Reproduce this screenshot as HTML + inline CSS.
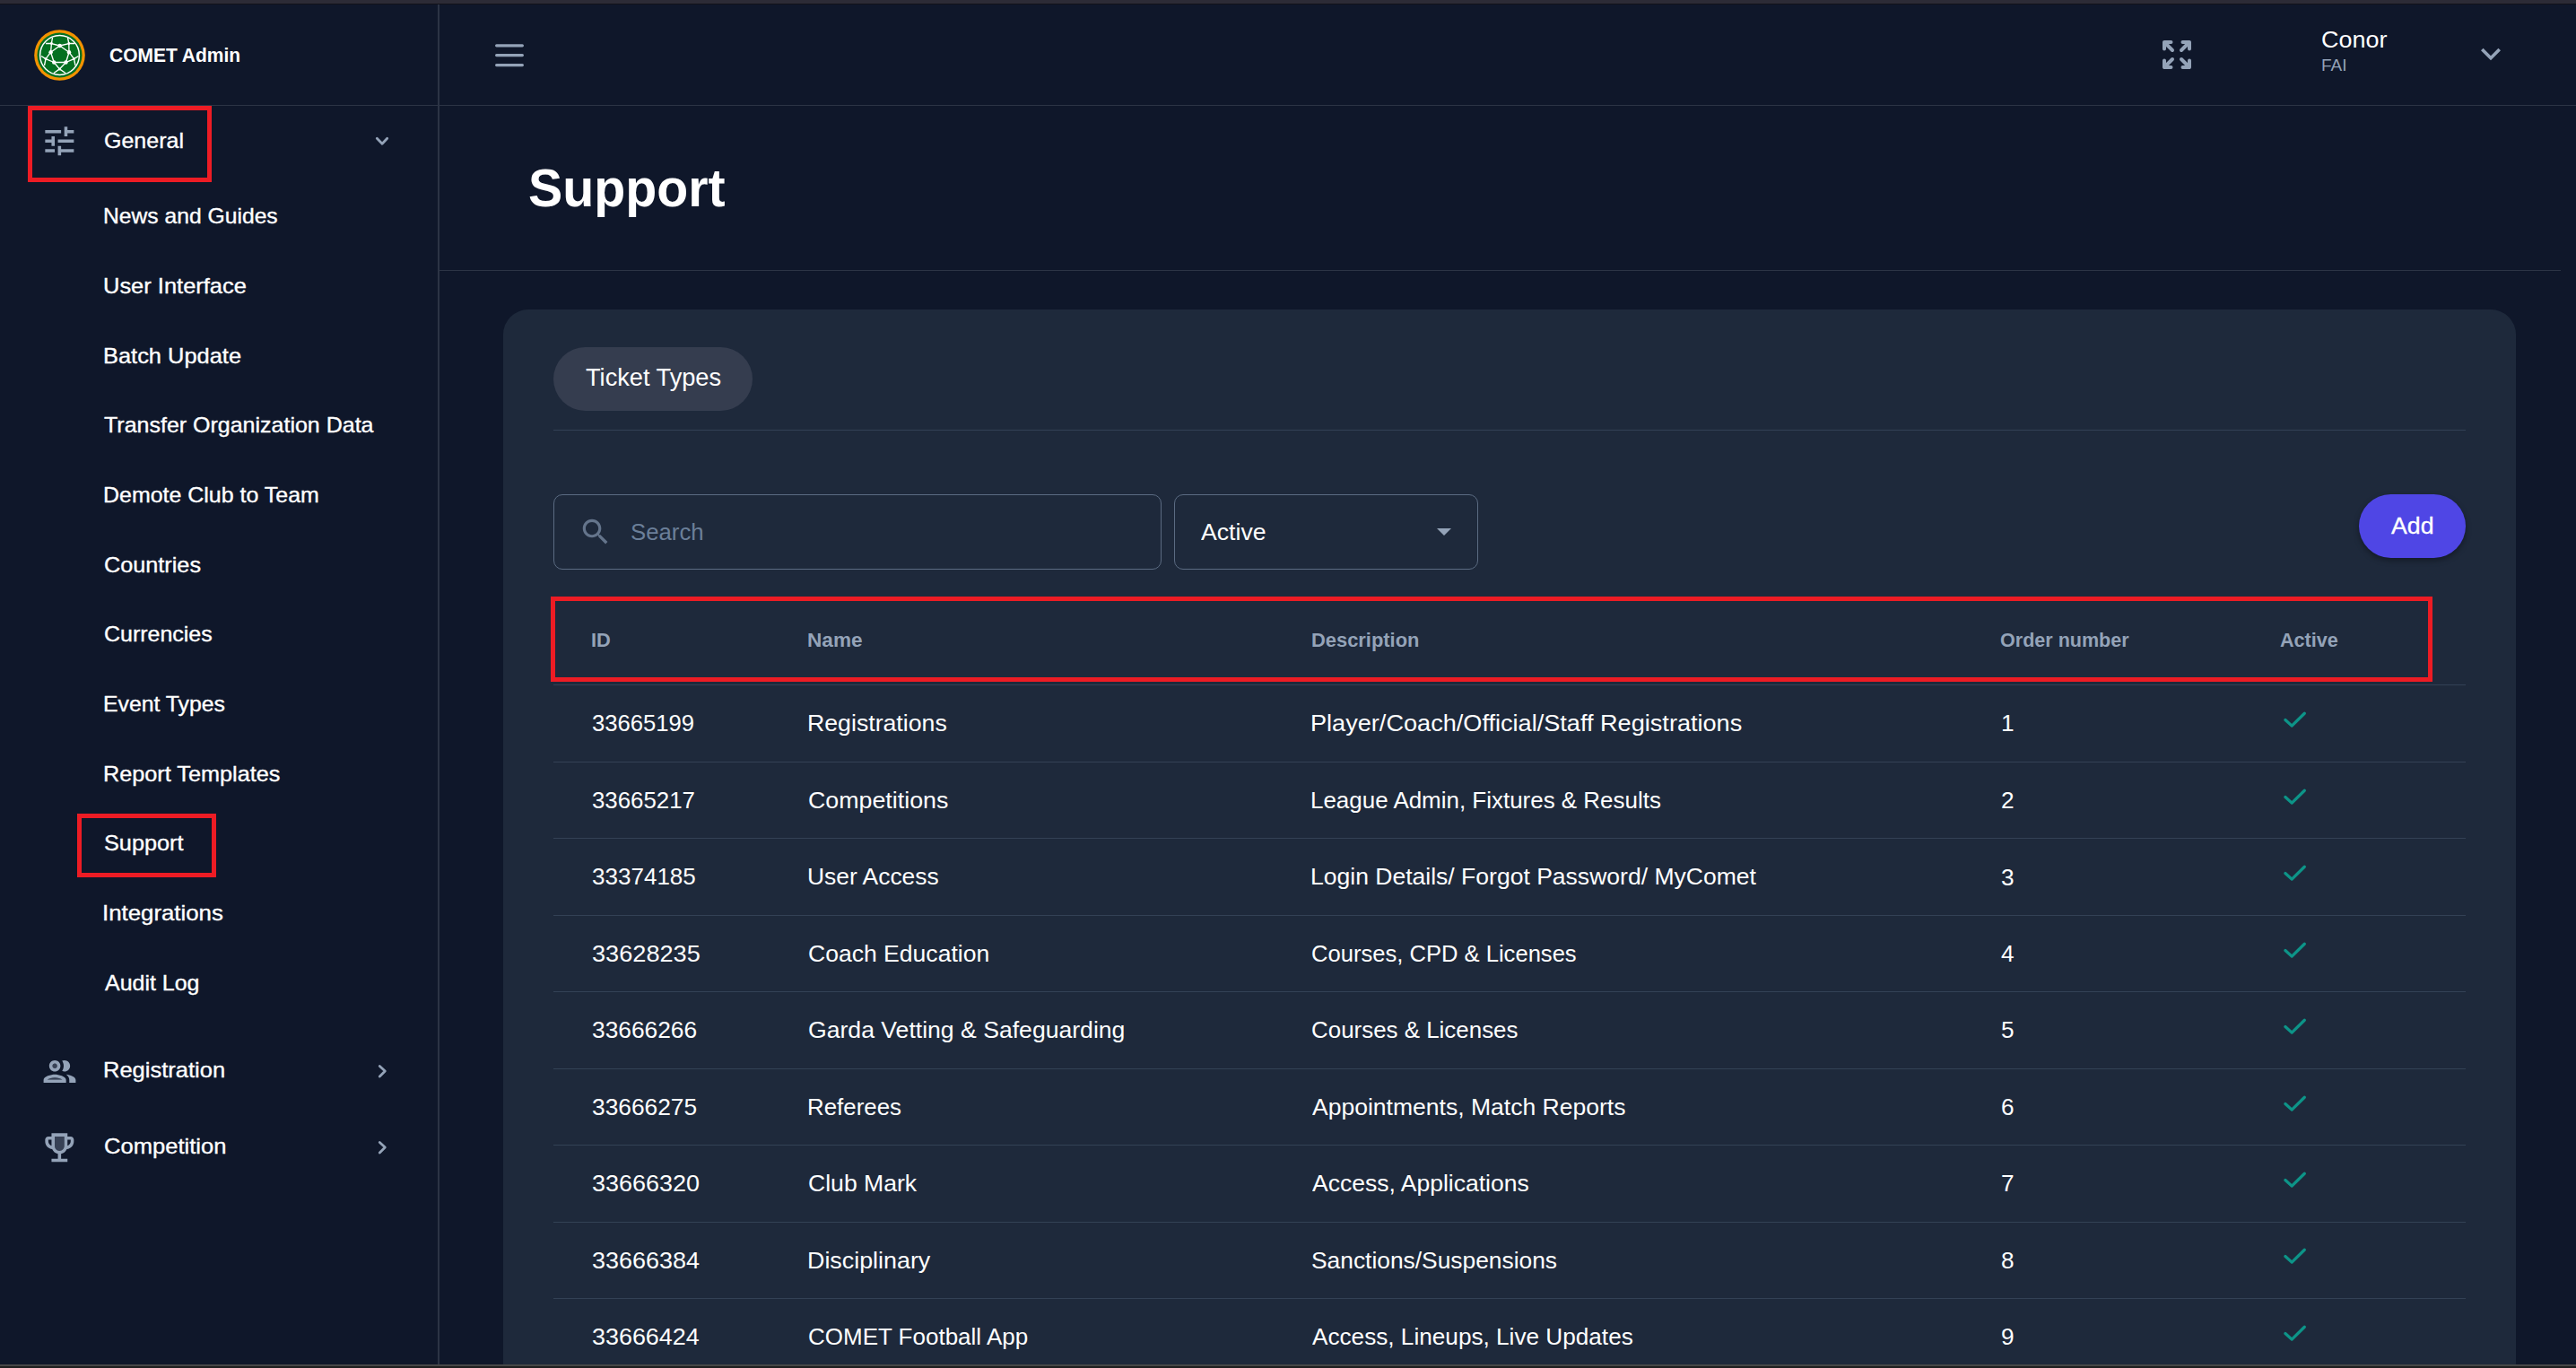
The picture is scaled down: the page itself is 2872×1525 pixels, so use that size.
<!DOCTYPE html>
<html><head><meta charset="utf-8"><style>
html,body{margin:0;padding:0;}
body{width:2872px;height:1525px;overflow:hidden;background:#0f172a;position:relative;font-family:"Liberation Sans", sans-serif;}
.t{position:absolute;line-height:1;white-space:nowrap;font-family:"Liberation Sans", sans-serif;}
.b{position:absolute;box-sizing:border-box;}
svg{position:absolute;overflow:visible;}
</style></head><body>
<div class="b" style="left:0.00px;top:0.00px;width:2872.00px;height:4.00px;background:#2c2b36"></div>
<div class="b" style="left:0.00px;top:4.00px;width:2872.00px;height:1.00px;background:#121218"></div>
<div class="b" style="left:488.00px;top:5.00px;width:2.00px;height:1516.00px;background:#2c3445"></div>
<div class="b" style="left:0.00px;top:117.00px;width:2872.00px;height:1.00px;background:#2c3445"></div>
<div class="b" style="left:490.00px;top:301.00px;width:2365.00px;height:1.00px;background:#2c3445"></div>
<svg style="left:37px;top:31.6px" width="59" height="59" viewBox="-29.5 -29.5 59 59">
<circle r="28.3" fill="#f39200"/>
<circle r="25.0" fill="#047021"/>
<circle r="21.9" fill="none" stroke="#fff" stroke-width="1.5"/>
<g stroke="#fff" stroke-width="1.35" fill="none">
<path d="M0.2,-10.5 L-9.9,-3.3 L-6.3,8 L7,8 L10.5,-3.3 Z"/>
<path d="M-6.3,8 L-0.1,15.4 L7,8"/>
<path d="M-9.9,-3.3 L-15.5,4.1 L-6.3,8 M10.5,-3.3 L16,4.1 L7,8"/>
<path d="M0.2,-10.5 L-9.1,-13 L-9.9,-3.3 M0.2,-10.5 L10.3,-13 L10.5,-3.3"/>
<path d="M-9.1,-13 L-8,-19.5 M10.3,-13 L9,-19.5 M-9.1,-13 L-15.5,-13 M10.3,-13 L16.5,-13"/>
<path d="M-15.5,4.1 L-20.5,1 M16,4.1 L21,1 M-15.5,4.1 L-17,11.5 M16,4.1 L17.5,11.5"/>
<path d="M-0.1,15.4 L-6.5,20 M-0.1,15.4 L6.5,20"/>
</g>
<g fill="#fff">
<circle cx="0.2" cy="-10.5" r="2.2"/><circle cx="-9.9" cy="-3.3" r="2.2"/><circle cx="10.5" cy="-3.3" r="2.2"/>
<circle cx="-6.3" cy="8" r="2.2"/><circle cx="7" cy="8" r="2.2"/><circle cx="-0.1" cy="15.4" r="1.5"/>
<circle cx="-15.5" cy="4.1" r="1.4"/><circle cx="16" cy="4.1" r="1.4"/>
<circle cx="-9.1" cy="-13" r="1.4"/><circle cx="10.3" cy="-13" r="1.4"/>
</g>
</svg>
<div class="t" style="left:122.16px;top:52.03px;font-size:21.5px;color:#fff;font-weight:700;transform:scaleX(0.9756);transform-origin:0 0;">COMET Admin</div>
<svg style="left:552px;top:48.5px" width="32" height="26" viewBox="0 0 32 26">
<g stroke="#94a3b8" stroke-width="3.2" stroke-linecap="round"><path d="M1.6,1.8 H30.4 M1.6,12.6 H30.4 M1.6,23.6 H30.4"/></g></svg>
<svg style="left:2411px;top:45px" width="32" height="32" viewBox="0 0 32 32">
<g stroke="#94a3b8" stroke-width="4" stroke-linecap="round" stroke-linejoin="round" fill="none">
<path d="M2,9.5 V2 H9.5 M2,2 L11,11"/>
<path d="M30,9.5 V2 H22.5 M30,2 L21,11"/>
<path d="M2,22.5 V30 H9.5 M2,30 L11,21"/>
<path d="M30,22.5 V30 H22.5 M30,30 L21,21"/>
</g></svg>
<div class="t" style="left:2588.15px;top:31.21px;font-size:26.5px;color:#fff;font-weight:400;transform:scaleX(1.0169);transform-origin:0 0;">Conor</div>
<div class="t" style="left:2587.98px;top:64.19px;font-size:18.0px;color:#94a3b8;font-weight:400;transform:scaleX(1.0547);transform-origin:0 0;">FAI</div>
<svg style="left:2755px;top:38px" width="44" height="44" viewBox="0 0 24 24">
<path fill="#94a3b8" d="M16.59 8.59L12 13.17 7.41 8.59 6 10l6 6 6-6z"/></svg>
<svg style="left:44.7px;top:135.7px" width="42.7" height="42.7" viewBox="0 0 24 24">
<path fill="#94a3b8" d="M3 17v2h6v-2H3zM3 5v2h10V5H3zm10 16v-2h8v-2h-8v-2h-2v6h2zM7 9v2H3v2h4v2h2V9H7zm14 4v-2H11v2h10zm-6-4h2V7h4V5h-4V3h-2v6z"/></svg>
<div class="t" style="left:115.55px;top:145.07px;font-size:24.3px;color:#fff;font-weight:400;-webkit-text-stroke:0.35px #fff;transform:scaleX(1.0296);transform-origin:0 0;">General</div>
<svg style="left:412px;top:142px" width="28" height="28" viewBox="0 0 28 28">
<path d="M8.3,12.3 L14.1,18.2 L19.7,12.3" stroke="#94a3b8" stroke-width="2.8" fill="none" stroke-linecap="round" stroke-linejoin="round"/></svg>
<div class="t" style="left:114.83px;top:229.27px;font-size:24.3px;color:#fff;font-weight:400;-webkit-text-stroke:0.35px #fff;transform:scaleX(1.0152);transform-origin:0 0;">News and Guides</div>
<div class="t" style="left:115.02px;top:306.95px;font-size:24.3px;color:#fff;font-weight:400;-webkit-text-stroke:0.35px #fff;transform:scaleX(1.0478);transform-origin:0 0;">User Interface</div>
<div class="t" style="left:114.77px;top:384.63px;font-size:24.3px;color:#fff;font-weight:400;-webkit-text-stroke:0.35px #fff;transform:scaleX(1.0462);transform-origin:0 0;">Batch Update</div>
<div class="t" style="left:116.30px;top:462.31px;font-size:24.3px;color:#fff;font-weight:400;-webkit-text-stroke:0.35px #fff;transform:scaleX(1.0285);transform-origin:0 0;">Transfer Organization Data</div>
<div class="t" style="left:114.80px;top:539.99px;font-size:24.3px;color:#fff;font-weight:400;-webkit-text-stroke:0.35px #fff;transform:scaleX(1.0267);transform-origin:0 0;">Demote Club to Team</div>
<div class="t" style="left:115.54px;top:617.68px;font-size:24.3px;color:#fff;font-weight:400;-webkit-text-stroke:0.35px #fff;transform:scaleX(1.0387);transform-origin:0 0;">Countries</div>
<div class="t" style="left:115.55px;top:695.36px;font-size:24.3px;color:#fff;font-weight:400;-webkit-text-stroke:0.35px #fff;transform:scaleX(1.0273);transform-origin:0 0;">Currencies</div>
<div class="t" style="left:114.82px;top:773.04px;font-size:24.3px;color:#fff;font-weight:400;-webkit-text-stroke:0.35px #fff;transform:scaleX(1.0202);transform-origin:0 0;">Event Types</div>
<div class="t" style="left:114.78px;top:850.72px;font-size:24.3px;color:#fff;font-weight:400;-webkit-text-stroke:0.35px #fff;transform:scaleX(1.0391);transform-origin:0 0;">Report Templates</div>
<div class="t" style="left:115.79px;top:928.40px;font-size:24.3px;color:#fff;font-weight:400;-webkit-text-stroke:0.35px #fff;transform:scaleX(1.0405);transform-origin:0 0;">Support</div>
<div class="t" style="left:114.48px;top:1006.08px;font-size:24.3px;color:#fff;font-weight:400;-webkit-text-stroke:0.35px #fff;transform:scaleX(1.0623);transform-origin:0 0;">Integrations</div>
<div class="t" style="left:116.80px;top:1083.77px;font-size:24.3px;color:#fff;font-weight:400;-webkit-text-stroke:0.35px #fff;transform:scaleX(1.0265);transform-origin:0 0;">Audit Log</div>
<svg style="left:44.7px;top:1172.7px" width="43" height="43" viewBox="0 0 24 24">
<path fill="#94a3b8" opacity=".3" d="M4.34 17c.84-.58 2.87-1.25 4.66-1.25s3.82.67 4.66 1.25H4.34z"/>
<circle cx="9" cy="8.5" r="1.5" fill="#94a3b8" opacity=".3"/>
<path fill="#94a3b8" d="M9 13.75c-2.34 0-7 1.17-7 3.5V19h14v-1.75c0-2.33-4.66-3.5-7-3.5zM4.34 17c.84-.58 2.87-1.25 4.66-1.25s3.82.67 4.66 1.25H4.34zM9 12c1.93 0 3.5-1.57 3.5-3.5S10.93 5 9 5 5.5 6.57 5.5 8.5 7.07 12 9 12zm0-5c.83 0 1.5.67 1.5 1.5S9.83 10 9 10s-1.5-.67-1.5-1.5S8.17 7 9 7zm7.04 6.81c1.16.84 1.96 1.96 1.96 3.44V19h4v-1.75c0-2.02-3.5-3.17-5.96-3.44zM15 12c1.93 0 3.5-1.57 3.5-3.5S16.93 5 15 5c-.54 0-1.04.13-1.5.35.63.89 1 1.98 1 3.15s-.37 2.26-1 3.15c.46.22.96.35 1.5.35z"/></svg>
<div class="t" style="left:114.76px;top:1181.47px;font-size:24.3px;color:#fff;font-weight:400;-webkit-text-stroke:0.35px #fff;transform:scaleX(1.0502);transform-origin:0 0;">Registration</div>
<svg style="left:412px;top:1180px" width="28" height="28" viewBox="0 0 28 28">
<path d="M11.3,8.5 L17.3,14 L11.3,19.9" stroke="#94a3b8" stroke-width="2.8" fill="none" stroke-linecap="round" stroke-linejoin="round"/></svg>
<svg style="left:44.7px;top:1257.6px" width="42.7" height="42.7" viewBox="0 0 24 24">
<path fill="#94a3b8" opacity=".3" d="M12 14c-1.65 0-3-1.35-3-3V5h6v6c0 1.65-1.35 3-3 3z"/>
<path fill="#94a3b8" d="M19 5h-2V3H7v2H5c-1.1 0-2 .9-2 2v1c0 2.55 1.92 4.63 4.39 4.94.63 1.5 1.98 2.63 3.61 2.96V19H7v2h10v-2h-4v-3.1c1.63-.33 2.98-1.46 3.61-2.96C19.08 12.63 21 10.55 21 8V7c0-1.1-.9-2-2-2zM5 8V7h2v3.82C5.84 10.4 5 9.3 5 8zm7 6c-1.65 0-3-1.35-3-3V5h6v6c0 1.65-1.35 3-3 3zm7-6c0 1.3-.84 2.4-2 2.82V7h2v1z"/></svg>
<div class="t" style="left:115.52px;top:1266.47px;font-size:24.3px;color:#fff;font-weight:400;-webkit-text-stroke:0.35px #fff;transform:scaleX(1.0521);transform-origin:0 0;">Competition</div>
<svg style="left:412px;top:1265px" width="28" height="28" viewBox="0 0 28 28">
<path d="M11.3,8.5 L17.3,14 L11.3,19.9" stroke="#94a3b8" stroke-width="2.8" fill="none" stroke-linecap="round" stroke-linejoin="round"/></svg>
<div class="b" style="left:31.00px;top:118.00px;width:205.00px;height:85.00px;border:5px solid #ed1c24"></div>
<div class="b" style="left:86.00px;top:907.00px;width:155.00px;height:71.00px;border:5px solid #ed1c24"></div>
<div class="t" style="left:588.85px;top:180.57px;font-size:58.5px;color:#fff;font-weight:700;transform:scaleX(0.9791);transform-origin:0 0;">Support</div>
<div class="b" style="left:561.00px;top:345.00px;width:2244.00px;height:1255.00px;background:#1e293b;border-radius:28px"></div>
<div class="b" style="left:617.00px;top:387.00px;width:222.00px;height:71.00px;background:#353d4f;border-radius:36px"></div>
<div class="t" style="left:652.66px;top:408.25px;font-size:26.8px;color:#fff;font-weight:400;transform:scaleX(1.0143);transform-origin:0 0;">Ticket Types</div>
<div class="b" style="left:617.00px;top:479.00px;width:2132.00px;height:1.00px;background:#334155"></div>
<div class="b" style="left:617.00px;top:551.00px;width:678.00px;height:84.00px;border:1.5px solid #5b6b82;border-radius:10px"></div>
<svg style="left:645px;top:574px" width="38" height="38" viewBox="0 0 24 24">
<path fill="#64748b" d="M15.5 14h-.79l-.28-.27C15.41 12.59 16 11.11 16 9.5 16 5.91 13.09 3 9.5 3S3 5.91 3 9.5 5.91 16 9.5 16c1.61 0 3.09-.59 4.23-1.57l.27.28v.79l5 4.99L20.49 19l-4.99-5zm-6 0C7.01 14 5 11.99 5 9.5S7.01 5 9.5 5 14 7.01 14 9.5 11.99 14 9.5 14z"/></svg>
<div class="t" style="left:702.97px;top:580.23px;font-size:26.0px;color:#6b7f99;font-weight:400;transform:scaleX(0.9915);transform-origin:0 0;">Search</div>
<div class="b" style="left:1309.00px;top:551.00px;width:339.00px;height:84.00px;border:1.5px solid #5b6b82;border-radius:10px"></div>
<div class="t" style="left:1339.00px;top:579.52px;font-size:26.6px;color:#fff;font-weight:400;transform:scaleX(1.0018);transform-origin:0 0;">Active</div>
<svg style="left:1602px;top:589px" width="16" height="8" viewBox="0 0 16 8"><path d="M0,0 H16 L8,8 Z" fill="#94a3b8"/></svg>
<div class="b" style="left:2630.00px;top:551.00px;width:119.00px;height:71.00px;background:#4f46e5;border-radius:36px;box-shadow:0 3px 6px rgba(0,0,0,0.35)"></div>
<div class="t" style="left:2666.00px;top:572.79px;font-size:26.4px;color:#fff;font-weight:400;-webkit-text-stroke:0.3px #fff;transform:scaleX(1.0112);transform-origin:0 0;">Add</div>
<div class="t" style="left:658.89px;top:702.56px;font-size:22.3px;color:#94a3b8;font-weight:700;transform:scaleX(0.9780);transform-origin:0 0;">ID</div>
<div class="t" style="left:900.44px;top:702.56px;font-size:22.3px;color:#94a3b8;font-weight:700;transform:scaleX(1.0133);transform-origin:0 0;">Name</div>
<div class="t" style="left:1462.39px;top:702.56px;font-size:22.3px;color:#94a3b8;font-weight:700;transform:scaleX(0.9819);transform-origin:0 0;">Description</div>
<div class="t" style="left:2230.14px;top:702.56px;font-size:22.3px;color:#94a3b8;font-weight:700;transform:scaleX(0.9661);transform-origin:0 0;">Order number</div>
<div class="t" style="left:2541.57px;top:702.56px;font-size:22.3px;color:#94a3b8;font-weight:700;transform:scaleX(0.9681);transform-origin:0 0;">Active</div>
<div class="b" style="left:617.00px;top:763.00px;width:2132.00px;height:1.00px;background:#334155"></div>
<div class="t" style="left:659.68px;top:793.01px;font-size:26.5px;color:#fff;font-weight:400;transform:scaleX(0.9673);transform-origin:0 0;">33665199</div>
<div class="t" style="left:900.07px;top:793.01px;font-size:26.5px;color:#fff;font-weight:400;transform:scaleX(1.0070);transform-origin:0 0;">Registrations</div>
<div class="t" style="left:1461.23px;top:793.01px;font-size:26.5px;color:#fff;font-weight:400;transform:scaleX(1.0232);transform-origin:0 0;">Player/Coach/Official/Staff Registrations</div>
<div class="t" style="left:2231.00px;top:793.26px;font-size:26.2px;color:#fff;font-weight:400;">1</div>
<svg style="left:2540px;top:786.90px" width="40" height="40" viewBox="0 0 40 40"><path d="M7.9,15.50 L15.2,22.10 L29.3,8.20" stroke="#0d9488" stroke-width="3.3" fill="none" stroke-linecap="round" stroke-linejoin="round"/></svg>
<div class="b" style="left:617.00px;top:849.00px;width:2132.00px;height:1.00px;background:#334155"></div>
<div class="t" style="left:659.67px;top:878.84px;font-size:26.5px;color:#fff;font-weight:400;transform:scaleX(0.9751);transform-origin:0 0;">33665217</div>
<div class="t" style="left:900.86px;top:878.84px;font-size:26.5px;color:#fff;font-weight:400;transform:scaleX(1.0109);transform-origin:0 0;">Competitions</div>
<div class="t" style="left:1461.32px;top:878.84px;font-size:26.5px;color:#fff;font-weight:400;transform:scaleX(0.9793);transform-origin:0 0;">League Admin, Fixtures &amp; Results</div>
<div class="t" style="left:2231.00px;top:879.09px;font-size:26.2px;color:#fff;font-weight:400;">2</div>
<svg style="left:2540px;top:872.73px" width="40" height="40" viewBox="0 0 40 40"><path d="M7.9,15.50 L15.2,22.10 L29.3,8.20" stroke="#0d9488" stroke-width="3.3" fill="none" stroke-linecap="round" stroke-linejoin="round"/></svg>
<div class="b" style="left:617.00px;top:934.00px;width:2132.00px;height:1.00px;background:#334155"></div>
<div class="t" style="left:659.67px;top:964.29px;font-size:26.5px;color:#fff;font-weight:400;transform:scaleX(0.9823);transform-origin:0 0;">33374185</div>
<div class="t" style="left:900.35px;top:964.29px;font-size:26.5px;color:#fff;font-weight:400;transform:scaleX(0.9961);transform-origin:0 0;">User Access</div>
<div class="t" style="left:1461.28px;top:964.29px;font-size:26.5px;color:#fff;font-weight:400;transform:scaleX(1.0011);transform-origin:0 0;">Login Details/ Forgot Password/ MyComet</div>
<div class="t" style="left:2231.00px;top:964.55px;font-size:26.2px;color:#fff;font-weight:400;">3</div>
<svg style="left:2540px;top:958.19px" width="40" height="40" viewBox="0 0 40 40"><path d="M7.9,15.50 L15.2,22.10 L29.3,8.20" stroke="#0d9488" stroke-width="3.3" fill="none" stroke-linecap="round" stroke-linejoin="round"/></svg>
<div class="b" style="left:617.00px;top:1020.00px;width:2132.00px;height:1.00px;background:#334155"></div>
<div class="t" style="left:659.64px;top:1049.75px;font-size:26.5px;color:#fff;font-weight:400;transform:scaleX(1.0245);transform-origin:0 0;">33628235</div>
<div class="t" style="left:900.87px;top:1049.75px;font-size:26.5px;color:#fff;font-weight:400;transform:scaleX(1.0019);transform-origin:0 0;">Coach Education</div>
<div class="t" style="left:1462.12px;top:1049.75px;font-size:26.5px;color:#fff;font-weight:400;transform:scaleX(0.9651);transform-origin:0 0;">Courses, CPD &amp; Licenses</div>
<div class="t" style="left:2231.00px;top:1050.00px;font-size:26.2px;color:#fff;font-weight:400;">4</div>
<svg style="left:2540px;top:1043.64px" width="40" height="40" viewBox="0 0 40 40"><path d="M7.9,15.50 L15.2,22.10 L29.3,8.20" stroke="#0d9488" stroke-width="3.3" fill="none" stroke-linecap="round" stroke-linejoin="round"/></svg>
<div class="b" style="left:617.00px;top:1105.00px;width:2132.00px;height:1.00px;background:#334155"></div>
<div class="t" style="left:659.66px;top:1135.21px;font-size:26.5px;color:#fff;font-weight:400;transform:scaleX(0.9935);transform-origin:0 0;">33666266</div>
<div class="t" style="left:900.87px;top:1135.21px;font-size:26.5px;color:#fff;font-weight:400;transform:scaleX(1.0037);transform-origin:0 0;">Garda Vetting &amp; Safeguarding</div>
<div class="t" style="left:1462.10px;top:1135.21px;font-size:26.5px;color:#fff;font-weight:400;transform:scaleX(0.9780);transform-origin:0 0;">Courses &amp; Licenses</div>
<div class="t" style="left:2231.00px;top:1135.46px;font-size:26.2px;color:#fff;font-weight:400;">5</div>
<svg style="left:2540px;top:1129.10px" width="40" height="40" viewBox="0 0 40 40"><path d="M7.9,15.50 L15.2,22.10 L29.3,8.20" stroke="#0d9488" stroke-width="3.3" fill="none" stroke-linecap="round" stroke-linejoin="round"/></svg>
<div class="b" style="left:617.00px;top:1191.00px;width:2132.00px;height:1.00px;background:#334155"></div>
<div class="t" style="left:659.66px;top:1220.66px;font-size:26.5px;color:#fff;font-weight:400;transform:scaleX(0.9935);transform-origin:0 0;">33666275</div>
<div class="t" style="left:900.13px;top:1220.66px;font-size:26.5px;color:#fff;font-weight:400;transform:scaleX(0.9760);transform-origin:0 0;">Referees</div>
<div class="t" style="left:1463.40px;top:1220.66px;font-size:26.5px;color:#fff;font-weight:400;transform:scaleX(1.0012);transform-origin:0 0;">Appointments, Match Reports</div>
<div class="t" style="left:2231.00px;top:1220.92px;font-size:26.2px;color:#fff;font-weight:400;">6</div>
<svg style="left:2540px;top:1214.56px" width="40" height="40" viewBox="0 0 40 40"><path d="M7.9,15.50 L15.2,22.10 L29.3,8.20" stroke="#0d9488" stroke-width="3.3" fill="none" stroke-linecap="round" stroke-linejoin="round"/></svg>
<div class="b" style="left:617.00px;top:1276.00px;width:2132.00px;height:1.00px;background:#334155"></div>
<div class="t" style="left:659.64px;top:1306.12px;font-size:26.5px;color:#fff;font-weight:400;transform:scaleX(1.0176);transform-origin:0 0;">33666320</div>
<div class="t" style="left:900.87px;top:1306.12px;font-size:26.5px;color:#fff;font-weight:400;transform:scaleX(1.0034);transform-origin:0 0;">Club Mark</div>
<div class="t" style="left:1463.40px;top:1306.12px;font-size:26.5px;color:#fff;font-weight:400;transform:scaleX(1.0007);transform-origin:0 0;">Access, Applications</div>
<div class="t" style="left:2231.00px;top:1306.38px;font-size:26.2px;color:#fff;font-weight:400;">7</div>
<svg style="left:2540px;top:1300.01px" width="40" height="40" viewBox="0 0 40 40"><path d="M7.9,15.50 L15.2,22.10 L29.3,8.20" stroke="#0d9488" stroke-width="3.3" fill="none" stroke-linecap="round" stroke-linejoin="round"/></svg>
<div class="b" style="left:617.00px;top:1362.00px;width:2132.00px;height:1.00px;background:#334155"></div>
<div class="t" style="left:659.64px;top:1391.58px;font-size:26.5px;color:#fff;font-weight:400;transform:scaleX(1.0179);transform-origin:0 0;">33666384</div>
<div class="t" style="left:900.05px;top:1391.58px;font-size:26.5px;color:#fff;font-weight:400;transform:scaleX(1.0131);transform-origin:0 0;">Disciplinary</div>
<div class="t" style="left:1462.35px;top:1391.58px;font-size:26.5px;color:#fff;font-weight:400;transform:scaleX(0.9948);transform-origin:0 0;">Sanctions/Suspensions</div>
<div class="t" style="left:2231.00px;top:1391.83px;font-size:26.2px;color:#fff;font-weight:400;">8</div>
<svg style="left:2540px;top:1385.47px" width="40" height="40" viewBox="0 0 40 40"><path d="M7.9,15.50 L15.2,22.10 L29.3,8.20" stroke="#0d9488" stroke-width="3.3" fill="none" stroke-linecap="round" stroke-linejoin="round"/></svg>
<div class="b" style="left:617.00px;top:1447.00px;width:2132.00px;height:1.00px;background:#334155"></div>
<div class="t" style="left:659.64px;top:1477.04px;font-size:26.5px;color:#fff;font-weight:400;transform:scaleX(1.0153);transform-origin:0 0;">33666424</div>
<div class="t" style="left:900.90px;top:1477.04px;font-size:26.5px;color:#fff;font-weight:400;transform:scaleX(0.9809);transform-origin:0 0;">COMET Football App</div>
<div class="t" style="left:1463.40px;top:1477.04px;font-size:26.5px;color:#fff;font-weight:400;transform:scaleX(0.9873);transform-origin:0 0;">Access, Lineups, Live Updates</div>
<div class="t" style="left:2231.00px;top:1477.29px;font-size:26.2px;color:#fff;font-weight:400;">9</div>
<svg style="left:2540px;top:1470.93px" width="40" height="40" viewBox="0 0 40 40"><path d="M7.9,15.50 L15.2,22.10 L29.3,8.20" stroke="#0d9488" stroke-width="3.3" fill="none" stroke-linecap="round" stroke-linejoin="round"/></svg>
<div class="b" style="left:614.00px;top:665.00px;width:2098.00px;height:95.00px;border:5px solid #ed1c24"></div>
<div class="b" style="left:0.00px;top:1521.00px;width:2872.00px;height:2.00px;background:#474747"></div>
<div class="b" style="left:0.00px;top:1523.00px;width:2872.00px;height:2.00px;background:#1f1f1f"></div>
</body></html>
